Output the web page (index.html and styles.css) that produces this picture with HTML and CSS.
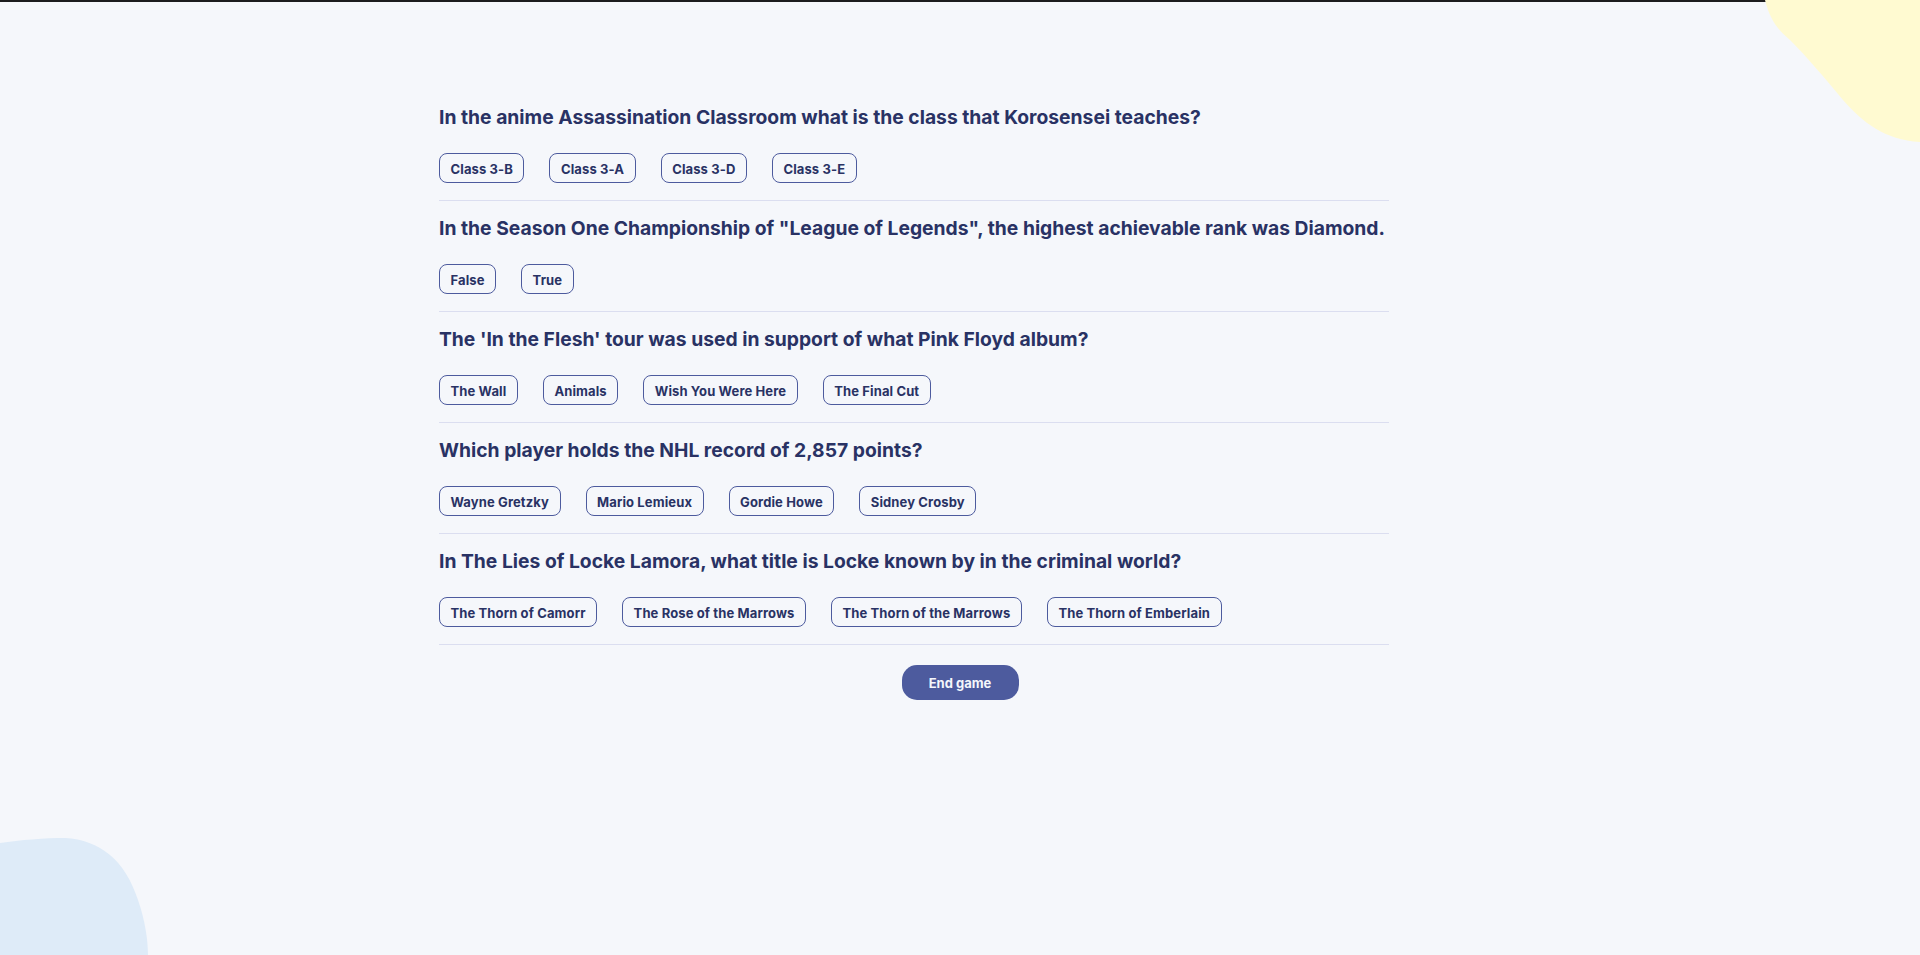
FILE: index.html
```html
<!DOCTYPE html>
<html lang="en">
<head>
<meta charset="utf-8">
<title>Quizzical</title>
<link rel="stylesheet" href="styles.css">
</head>
<body>
<div class="topbar"></div>
<svg class="blob blob-yellow" width="160" height="150" viewBox="1760 0 160 150" aria-hidden="true">
  <path d="M1765,0 C1770,20 1778,30 1790,40 C1805,55 1825,78 1843,100 C1862,122 1885,140 1920,142 L1920,0 Z" fill="#fffad1"/>
</svg>
<svg class="blob blob-blue" width="150" height="120" viewBox="0 835 150 120" aria-hidden="true">
  <path d="M0,843 C20,840 45,838 65,838 C100,840 125,860 138,900 C145,920 148,940 148,955 L0,955 Z" fill="#deebf8"/>
</svg>
<main class="page">
  <section class="quiz">
    <div class="question">
      <h2 class="q-title">In the anime Assassination Classroom what is the class that Korosensei teaches?</h2>
      <div class="answers">
        <button class="answer">Class 3-B</button>
        <button class="answer">Class 3-A</button>
        <button class="answer">Class 3-D</button>
        <button class="answer">Class 3-E</button>
      </div>
    </div>
    <div class="question">
      <h2 class="q-title">In the Season One Championship of "League of Legends", the highest achievable rank was Diamond.</h2>
      <div class="answers">
        <button class="answer">False</button>
        <button class="answer">True</button>
      </div>
    </div>
    <div class="question">
      <h2 class="q-title">The 'In the Flesh' tour was used in support of what Pink Floyd album?</h2>
      <div class="answers">
        <button class="answer">The Wall</button>
        <button class="answer">Animals</button>
        <button class="answer">Wish You Were Here</button>
        <button class="answer">The Final Cut</button>
      </div>
    </div>
    <div class="question">
      <h2 class="q-title">Which player holds the NHL record of 2,857 points?</h2>
      <div class="answers">
        <button class="answer">Wayne Gretzky</button>
        <button class="answer">Mario Lemieux</button>
        <button class="answer">Gordie Howe</button>
        <button class="answer">Sidney Crosby</button>
      </div>
    </div>
    <div class="question">
      <h2 class="q-title">In The Lies of Locke Lamora, what title is Locke known by in the criminal world?</h2>
      <div class="answers">
        <button class="answer">The Thorn of Camorr</button>
        <button class="answer">The Rose of the Marrows</button>
        <button class="answer">The Thorn of the Marrows</button>
        <button class="answer">The Thorn of Emberlain</button>
      </div>
    </div>
  </section>
  <div class="actions">
    <button class="end-btn">End game</button>
  </div>
</main>
</body>
</html>
```
FILE: styles.css
```css
* { box-sizing: border-box; }
html, body { margin: 0; padding: 0; }
body {
  background: #f5f7fb;
  color: #293264;
  font-family: "Inter", "Liberation Sans", sans-serif;
  min-height: 955px;
  position: relative;
  overflow: hidden;
}
.topbar { height: 2px; background: #1c1c1e; }
.blob { position: absolute; display: block; }
.blob-yellow { top: 0; right: 0; }
.blob-blue { bottom: 0; left: 0; }
.page { position: relative; padding-top: 88px; }
.quiz { width: 950px; margin-left: 439px; }
.question { padding: 15px 0 17px; border-bottom: 1px solid #dbdef0; }
.q-title { margin: 0; font-size: 19.3px; line-height: 24px; font-weight: 700; white-space: nowrap; }
.answers { display: flex; gap: 25px; margin-top: 24px; }
.answer {
  height: 30px; padding: 1px 10.5px 0; border: 1px solid #4d5b9e; border-radius: 8px;
  background: transparent; color: #293264; font-family: inherit; font-size: 13px; font-weight: 700;
  letter-spacing: 0.12px;
}
.actions { display: flex; justify-content: center; margin-top: 20px; }
.end-btn {
  width: 117px; height: 35px; border: none; border-radius: 15px; background: #4d5b9e;
  color: #f5f7fb; font-family: inherit; font-size: 13px; font-weight: 700;
}
```
